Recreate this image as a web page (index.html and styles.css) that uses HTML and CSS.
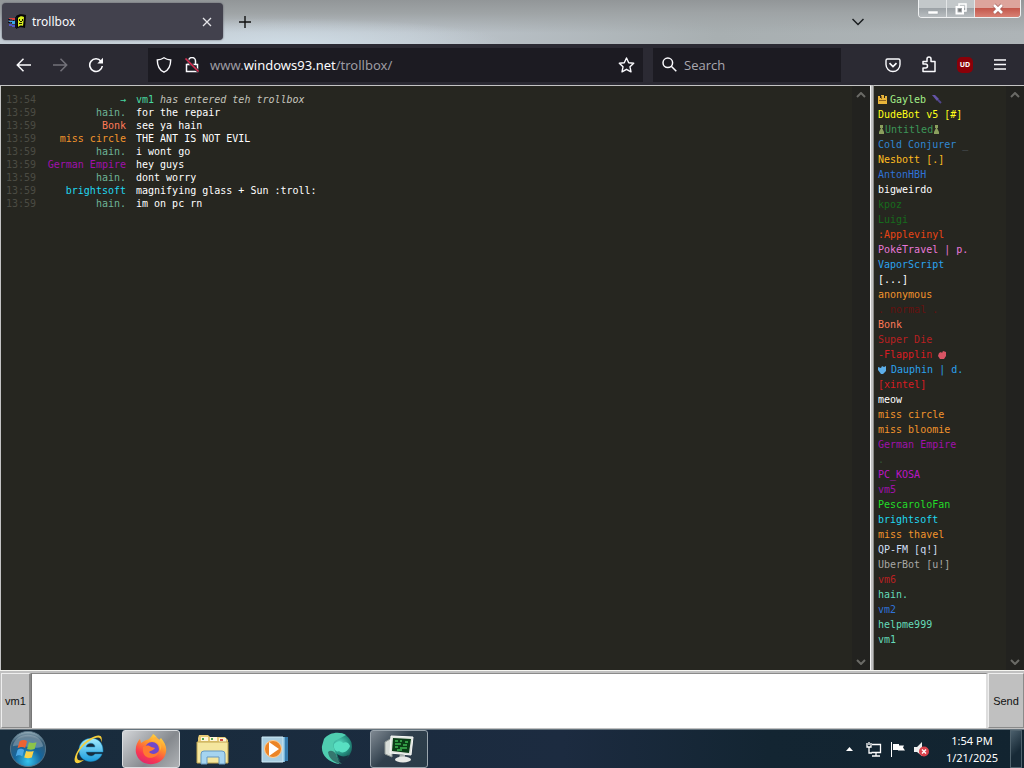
FILE: index.html
```html
<!DOCTYPE html>
<html lang="en">
<head>
<meta charset="utf-8">
<title>trollbox</title>
<link rel="stylesheet" href="styles.css">
</head>
<body>
<header class="titlebar">
  <div class="tab">
    <svg class="favicon" width="18" height="16" viewBox="0 0 18 16"><path d="M8 2c3-2 6-2 10-1l-1 13c-3-1-6-1-9 1z" fill="#050505"/><path d="M10 4c2-2 4-2 6-1l-1 9c-2-1-4 0-5 1z" fill="#d8ee20"/><path d="M11 5h1v2h-1zM14 5h1v2h-1zM11 9h3v1h-3zM12 7h2v1h-2z" fill="#161800"/><path d="M1 4h3v1H1zM4 4h4v2H4z" fill="#d8403c"/><path d="M1 7h3v1H1zM4 7h4v3H4z" fill="#38a8e8"/><path d="M1 10h3v2H1zM4 11h4v2H4z" fill="#5356c8"/><path d="M0 5h2v1H0zM0 8h2v1H0zM5 6h1v1H5zM3 8h1v1H3zM7 3h2v11H7z" fill="#101020"/></svg>
    <span class="tab-title">trollbox</span>
    <button class="icon-btn tab-close" aria-label="Close tab"><svg width="10" height="10" viewBox="0 0 10 10" fill="none" stroke="#e4e4e8" stroke-width="1.3"><path d="M1 1l8 8M9 1L1 9"/></svg></button>
  </div>
  <button class="icon-btn new-tab" aria-label="New tab"><svg width="12" height="12" viewBox="0 0 12 12" stroke="#111" stroke-width="1.4"><path d="M6 0v12M0 6h12"/></svg></button>
  <button class="icon-btn list-tabs" aria-label="List all tabs"><svg width="12" height="8" viewBox="0 0 12 8" fill="none" stroke="#1a1e20" stroke-width="1.5"><path d="M.5 1L6 6.5 11.500 1"/></svg></button>
  <div class="window-controls">
    <button class="wc wc-min" aria-label="Minimize"><svg width="12" height="12" viewBox="0 0 12 12"><path d="M1 8h10v3H1z" fill="#fff" stroke="#9ba1a4" stroke-width=".5"/></svg></button>
    <button class="wc wc-max" aria-label="Restore"><svg width="12" height="12" viewBox="0 0 12 12" fill="none"><path d="M4 3V1h7v7H9" stroke="#fff" stroke-width="1.500"/><path d="M1.500 4h6.500v6.500H1.500z" stroke="#fff" stroke-width="2"/><path d="M3.500 6h2.500v2.500H3.500z" fill="#777"/></svg></button>
    <button class="wc wc-close" aria-label="Close"><svg width="12" height="12" viewBox="0 0 12 12"><path d="M2 2l8 8M10 2l-8 8" stroke="#a4605a" stroke-width="4"/><path d="M2 2l8 8M10 2l-8 8" stroke="#fff" stroke-width="2.600"/></svg></button>
  </div>
</header>

<nav class="toolbar">
  <div class="nav-group">
    <button class="icon-btn" aria-label="Back"><svg width="16" height="16" viewBox="0 0 16 16" fill="none" stroke="#fbfbfe" stroke-width="1.500"><path d="M15 8H1.500M7.500 1.800L1.300 8l6.200 6.200"/></svg></button>
    <button class="icon-btn" aria-label="Forward"><svg width="16" height="16" viewBox="0 0 16 16" fill="none" stroke="#73727a" stroke-width="1.500"><path d="M1 8h13.500M8.500 1.800L14.700 8l-6.200 6.200"/></svg></button>
    <button class="icon-btn" aria-label="Reload"><svg width="16" height="16" viewBox="0 0 16 16"><path d="M13 4.200A6.300 6.300 0 1 0 14.300 9" fill="none" stroke="#fbfbfe" stroke-width="1.600"/><path d="M15 .8v5.700H9.300z" fill="#fbfbfe"/></svg></button>
  </div>
  <div class="urlbar">
    <svg width="16" height="16" viewBox="0 0 16 16" fill="none" stroke="#fbfbfe" stroke-width="1.400"><path d="M8 .8C6 2.200 3.500 2.800 1.300 3 1.300 8.500 2.500 12.800 8 15.200c5.500-2.400 6.700-6.700 6.700-12.200C12.500 2.800 10 2.200 8 .8z"/></svg>
    <svg width="16" height="16" viewBox="0 0 16 16" fill="none"><path d="M4.500 7V4a3.500 3.500 0 0 1 7 0v3M2.500 7.500h11v7h-11z" stroke="#fbfbfe" stroke-width="1.500"/><path d="M1.500 1.500l13 13" stroke="#26252c" stroke-width="3"/><path d="M1.500 1.500l13 13" stroke="#d92c50" stroke-width="1.600"/></svg>
    <a class="url" href="#"><span class="dim">www.</span>windows93.net<span class="dim">/trollbox/</span></a>
    <button class="icon-btn star" aria-label="Bookmark this page"><svg width="17" height="16" viewBox="0 0 17 16" fill="none" stroke="#fbfbfe" stroke-width="1.400" stroke-linejoin="round"><path d="M8.500 1l2.200 4.700 5 .6-3.700 3.500 1 5-4.500-2.500L4 14.800l1-5L1.300 6.300l5-.6z"/></svg></button>
  </div>
  <label class="searchbar">
    <svg width="15" height="15" viewBox="0 0 15 15" fill="none" stroke="#fbfbfe" stroke-width="1.500"><circle cx="5.800" cy="5.800" r="4.800"/><path d="M9.300 9.300l5 5"/></svg>
    <input type="text" placeholder="Search" aria-label="Search">
  </label>
  <div class="tools">
    <button class="icon-btn" aria-label="Pocket"><svg width="16" height="16" viewBox="0 0 16 16" fill="none" stroke="#fbfbfe" stroke-width="1.400"><path d="M2.500 2h11q1.500 0 1.500 1.500V7.500a7 7 0 0 1-14 0V3.500Q1 2 2.500 2z"/><path d="M4.500 6.200L8 9.500l3.500-3.300" stroke-width="1.700"/></svg></button>
    <button class="icon-btn" aria-label="Extensions"><svg width="16" height="17" viewBox="0 0 16 17" fill="none" stroke="#fbfbfe" stroke-width="1.500" stroke-linejoin="round"><path d="M2 5.500h4V3a2 2 0 0 1 4 0v2.500h4v10H2v-3.500h2.500a2 2 0 0 0 0-4H2z"/></svg></button>
    <button class="icon-btn" aria-label="uBlock Origin"><span class="ublock">UD</span></button>
    <button class="icon-btn" aria-label="Menu"><svg width="14" height="12" viewBox="0 0 14 12" stroke="#fbfbfe" stroke-width="1.400"><path d="M1 1h12M1 5.500h12M1 10h12"/></svg></button>
  </div>
</nav>

<main class="app">
  <div class="panels">
    <section class="panel chat">
      <div class="log">
        <div class="msg"><time>13:54</time><b class="mint">→</b><p><span class="mint">vm1</span> <i>has entered teh trollbox</i></p></div>
        <div class="msg"><time>13:59</time><b class="sea">hain.</b><p>for the repair</p></div>
        <div class="msg"><time>13:59</time><b class="coral">Bonk</b><p>see ya hain</p></div>
        <div class="msg"><time>13:59</time><b class="orange">miss circle</b><p>THE ANT IS NOT EVIL</p></div>
        <div class="msg"><time>13:59</time><b class="sea">hain.</b><p>i wont go</p></div>
        <div class="msg"><time>13:59</time><b class="purple">German Empire</b><p>hey guys</p></div>
        <div class="msg"><time>13:59</time><b class="sea">hain.</b><p>dont worry</p></div>
        <div class="msg"><time>13:59</time><b class="cyan">brightsoft</b><p>magnifying glass + Sun :troll:</p></div>
        <div class="msg"><time>13:59</time><b class="sea">hain.</b><p>im on pc rn</p></div>
      </div>
      <div class="scroll"><svg width="10" height="6" viewBox="0 0 10 6"><path d="M1 5l4-4 4 4"/></svg><svg width="10" height="6" viewBox="0 0 10 6"><path d="M1 1l4 4 4-4"/></svg></div>
    </section>
    <aside class="panel users">
      <ul class="names">
        <li class="lime"><svg width="10" height="9" viewBox="0 0 10 9"><path d="M0 1h2v2h1V0h3v3h1V1h2v8H0z" fill="#e8b53a"/><path d="M1 5h7v1H1zM3 1h1v3H3z" fill="#8e6420"/></svg><span>Gayleb</span><svg class="knife" width="10" height="9" viewBox="0 0 10 9"><path d="M0 0h3l4 4-2 2z" fill="#6554a8"/><path d="M6 5l3 3" stroke="#50458a" stroke-width="2"/></svg></li>
        <li class="yellow">DudeBot v5 [#]</li>
        <li class="green"><svg width="7" height="9" viewBox="0 0 7 9"><path d="M2 0h3v3H4l2 4v2H1V7l2-4H2z" fill="#8ba05d"/></svg>Untitled<svg width="7" height="9" viewBox="0 0 7 9"><path d="M2 0h3v3H4l2 4v2H1V7l2-4H2z" fill="#8ba05d"/></svg></li>
        <li class="blue"><span>Cold Conjurer <span class="faint">_</span></span></li>
        <li class="gold">Nesbott [.]</li>
        <li class="royal">AntonHBH</li>
        <li class="white">bigweirdo</li>
        <li class="forest">kpoz</li>
        <li class="forest">Luigi</li>
        <li class="redorange">:Applevinyl</li>
        <li class="orchid">PokéTravel | p.</li>
        <li class="azure">VaporScript</li>
        <li class="white">[...]</li>
        <li class="orange">anonymous</li>
        <li class="maroon">. normal .</li>
        <li class="coral">Bonk</li>
        <li class="crimson">Super Die</li>
        <li class="red"><span>-Flapplin</span><svg class="after" width="9" height="9" viewBox="0 0 9 9"><path d="M1 3l2-1 1 1 1-2 3 1v4L6 9H2L0 6z" fill="#d85464"/></svg></li>
        <li class="azure"><svg class="before" width="9" height="9" viewBox="0 0 9 9"><path d="M0 2l3 1 1-2 2 1 2-1v5L5 9H3L0 5z" fill="#5daee8"/></svg><span>Dauphin | d.</span></li>
        <li class="red">[xintel]</li>
        <li class="white">meow</li>
        <li class="orange">miss circle</li>
        <li class="orange">miss bloomie</li>
        <li class="purple">German Empire</li>
        <li class="moss">.</li>
        <li class="magenta">PC_KOSA</li>
        <li class="purple">vm5</li>
        <li class="lawn">PescaroloFan</li>
        <li class="cyan">brightsoft</li>
        <li class="orange">miss thavel</li>
        <li class="pale">QP-FM [q!]</li>
        <li class="gray">UberBot [u!]</li>
        <li class="crimson">vm6</li>
        <li class="aqua">hain.</li>
        <li class="royal">vm2</li>
        <li class="aqua">helpme999</li>
        <li class="aqua">vm1</li>
      </ul>
      <div class="scroll"><svg width="10" height="6" viewBox="0 0 10 6"><path d="M1 5l4-4 4 4"/></svg><svg width="10" height="6" viewBox="0 0 10 6"><path d="M1 1l4 4 4-4"/></svg></div>
    </aside>
  </div>
  <form class="composer">
    <button type="button" class="nick">vm1</button>
    <textarea aria-label="Message"></textarea>
    <button type="button" class="send">Send</button>
  </form>
</main>

<footer class="taskbar">
  <button class="task start" aria-label="Start"><svg width="40" height="38" viewBox="0 0 40 40"><defs><radialGradient id="orb" cx=".5" cy=".85" r=".85"><stop offset="0" stop-color="#35c4ee"/><stop offset=".45" stop-color="#15659c"/><stop offset=".8" stop-color="#365b74"/><stop offset="1" stop-color="#a0b6c0"/></radialGradient></defs><circle cx="20" cy="20" r="18.500" fill="url(#orb)" stroke="#587688"/><path d="M4 17C7 1 33 1 36 17 25 22 15 14 4 17z" fill="#fff" opacity=".25"/><path d="M11 12c3-2 6-2 8 0l-2 7c-3-2-5-1-8 0z" fill="#ec6432"/><path d="M21 13c3 1 5 1 8 0l-2 7c-3 1-5 1-8 0z" fill="#8bc44a"/><path d="M9 21c3-2 5-1 7 0l-2 7c-2-2-5-2-7 0z" fill="#4ba8e6"/><path d="M18 22c3 1 5 1 8 0l-2 7c-3 1-5 1-8 0z" fill="#fbd248"/></svg></button>
  <button class="task" aria-label="Internet Explorer"><svg width="32" height="32" viewBox="0 0 32 32"><defs><linearGradient id="ie" x2="0" y2="1"><stop stop-color="#a5ecff"/><stop offset="1" stop-color="#1a9bdc"/></linearGradient></defs><path d="M30 19H13c1 5 7 5 9 2h7c-4 11-23 10-23-4C6 2 31 0 30 19zM13 14h9c0-5-8-5-9 0z" fill="url(#ie)" stroke="#148ac0" stroke-width=".5"/><path d="M28 10c3-9-3-9-10-5C10 9 4 17 2 24c-2 7 3 8 9 3-12 3-7-10 4-18 9-6 14-6 13 1z" fill="#f6cf3b"/></svg></button>
  <button class="task focused" aria-label="Firefox"><svg width="32" height="32" viewBox="0 0 32 32"><defs><linearGradient id="fox" x1=".8" y1="0" x2=".3" y2="1"><stop stop-color="#ffe045"/><stop offset=".4" stop-color="#ff902b"/><stop offset=".75" stop-color="#fa3950"/><stop offset="1" stop-color="#df286e"/></linearGradient></defs><path d="M18 1c4 2 4 5 6 6l2-2c4 5 6 9 5 14C29 34 5 36 1 20 0 14 2 9 5 6l1 4 5-3c2 0 4-1 7-6z" fill="url(#fox)"/><circle cx="17" cy="16" r="7" fill="#7048cc"/><path d="M8 14c3-2 6-2 8 0l4 1c-2 3-4 2-6 4 4 4 8 1 10-1-1 8-15 10-16 0z" fill="#ff7931"/><path d="M16 8c7-1 10 5 9 10 3-5 1-12-5-14z" fill="#ffb23b"/></svg></button>
  <button class="task" aria-label="File Explorer"><svg width="34" height="32" viewBox="0 0 34 32"><path d="M2 5l1-3h9l2 2h15l3 3v23H2z" fill="#e7cb77"/><path d="M5 4h7v4H5zM14 4h7v4h-7zM23 5h7v4h-7z" fill="#fff6d8"/><path d="M6 5h2v2H6zM15 5h2v2h-2z" fill="#51a652"/><path d="M24 6h3v2h-3z" fill="#d04b40"/><path d="M1 9h31v21H1z" fill="#f4e69e" stroke="#c1a650"/><path d="M5 31V21q0-3 3-3h18q3 0 3 3v10h-6v-7H11v7z" fill="#a5d4f0" stroke="#6497c0"/></svg></button>
  <button class="task" aria-label="Media Player"><svg width="28" height="27" viewBox="0 0 28 27"><path d="M6 1h21v24H6z" fill="#347aac"/><path d="M3 1h21v25H3z" fill="#75b4d8"/><path d="M1 1h21v25H1z" fill="#a8cde0" stroke="#ceebf7"/><circle cx="12" cy="13" r="8.500" fill="#eb8426" stroke="#ffd096"/><path d="M8 6l10 7-10 7z" fill="#fff"/></svg></button>
  <button class="task" aria-label="Teal orb"><svg width="34" height="34" viewBox="0 0 34 34"><defs><radialGradient id="teal" cx=".55" cy=".4" r=".6"><stop stop-color="#5ce0c4"/><stop offset=".6" stop-color="#258f80"/><stop offset="1" stop-color="#15504f"/></radialGradient></defs><circle cx="18" cy="15" r="14" fill="url(#teal)"/><path d="M4 7C9 0 20-1 26 3L15 9c-2 2-2 5-1 7l5 16C8 30 1 23 2 14z" fill="#4fcdb0"/><path d="M14 12c4-4 7-3 9-1 3-2 6 0 7 3-2 6-8 8-11 5-3 2-6-3-5-7z" fill="#58dfc2"/><path d="M8 20c2-2 5-2 8 2 1 4 2 7 6 10C14 31 9 27 8 20z" fill="#35776f"/><path d="M17 22c4 3 8 3 12 1l-6 8c-3-2-5-5-6-9z" fill="#18303f"/></svg></button>
  <button class="task open" aria-label="Remote desktop"><svg width="32" height="28" viewBox="0 0 32 28"><path d="M2 7l7-4v19l-7-3z" fill="#d8ddd9" stroke="#929b98"/><path d="M8 1l22 1-2 18-21-2z" fill="#e0e4de" stroke="#fafcf9"/><path d="M10 3l18 1-2 14-17-2z" fill="#0a3d16"/><path d="M12 6h3M17 6h2M22 7h3M12 9h6M20 10h4M12 12h3M17 13h7M14 15h5" stroke="#3fb653" stroke-width="1.300"/><path d="M17 19l5 1v3h-6z" fill="#a9b0ad"/><ellipse cx="20" cy="24.500" rx="8" ry="3" fill="#e7e9e6"/></svg></button>
  <div class="tray">
    <button class="icon-btn" aria-label="Show hidden icons"><svg width="7" height="4" viewBox="0 0 7 4"><path d="M3.500 0L7 4H0z" fill="#fff"/></svg></button>
    <svg width="16" height="15" viewBox="0 0 16 15" fill="none" stroke="#fff" stroke-width="1.300"><path d="M6 2.500h8.500v8H5.500M10 11v3M6 14h8M3 5v6h3M1 1v4h4V1M3 0v3"/></svg>
    <svg width="16" height="15" viewBox="0 0 16 15"><path d="M1 0h1v15H1zM3 2h6v1.500h5l-1 2 2 3H8V8H3z" fill="#fff"/></svg>
    <svg width="16" height="15" viewBox="0 0 16 15"><path d="M0 5h3l5-5v14L3 10H0z" fill="#eee"/><circle cx="10" cy="9.500" r="5" fill="#d9414b"/><path d="M8 7.500l4 4M12 7.500l-4 4" stroke="#fff" stroke-width="1.400"/></svg>
    <time class="clock"><span>1:54 PM</span><span>1/21/2025</span></time>
    <button class="show-desktop" aria-label="Show desktop"></button>
  </div>
</footer>
</body>
</html>
```
FILE: styles.css
```css
* { box-sizing: border-box; }
body {
  margin: 0;
  height: 100vh;
  display: flex;
  flex-direction: column;
  overflow: hidden;
  font-family: "Noto Sans", "Open Sans", sans-serif;
  background: #262620;
}
svg { display: block; flex: none; }
button { font-family: inherit; padding: 0; margin: 0; border: 0; background: none; }
.icon-btn { display: flex; align-items: center; justify-content: center; }

.titlebar {
  flex: none;
  height: 44px;
  display: flex;
  align-items: center;
  background:
    radial-gradient(ellipse 220px 26px at 28% 100%, #cfdce5, transparent),
    linear-gradient(180deg, #929698 0, #9fa4a6 30%, transparent 75%),
    linear-gradient(90deg, #c4cdd5, #bdc5cc 40%, #a8afb1 70%, #aeb4b7);
}
.tab {
  align-self: flex-start;
  width: 221px;
  height: 37px;
  margin: 3px 0 0 2px;
  padding: 0 11px 0 6px;
  display: flex;
  align-items: center;
  gap: 6px;
  border-radius: 4px;
  background: #42414d;
  box-shadow: 0 0 2px #55555f;
  color: #fbfbfe;
  font-size: 12px;
}
.tab-title { flex: 1; }
.new-tab { margin-left: 16px; }
.list-tabs { margin-left: auto; margin-right: 54px; }
.window-controls {
  align-self: flex-start;
  display: flex;
  width: 103px;
  height: 18px;
  margin-right: 3px;
  border: 1px solid #eef0f1;
  border-top: 0;
  border-radius: 0 0 4px 4px;
  overflow: hidden;
}
.wc {
  display: flex;
  align-items: center;
  justify-content: center;
  flex: 28;
  background: linear-gradient(#c3c8ca 0 45%, #9da3a7 50%, #b8bdc0);
}
.wc + .wc { border-left: 1px solid #e2e5e6; }
.wc-close { flex: 46; background: linear-gradient(#dda49c 0 45%, #c4584c 50%, #d98174); }

.toolbar {
  flex: none;
  height: 41px;
  display: flex;
  align-items: center;
  background: #2b2a33;
}
.nav-group { flex: none; display: flex; gap: 20px; padding-left: 16px; width: 148px; }
.urlbar, .searchbar { height: 34px; display: flex; align-items: center; background: #1c1b22; }
.urlbar { flex: 1; min-width: 0; padding: 0 8px; gap: 12px; }
.url { color: #fbfbfe; text-decoration: none; font-size: 13px; margin-left: -2px; }
.dim { color: #9c9ba3; }
.star { margin-left: auto; }
.searchbar { flex: none; width: 188px; margin-left: 10px; padding: 0 9px; gap: 7px; }
.searchbar input {
  min-width: 0;
  flex: 1;
  border: 0;
  padding: 0;
  background: none;
  color: #fbfbfe;
  font: 13px "Open Sans", sans-serif;
}
.searchbar input::placeholder { color: #a9a8b0; opacity: 1; }
.tools { flex: none; display: flex; align-items: center; gap: 20px; padding: 0 17px 0 44px; }
.ublock {
  width: 16px;
  height: 16px;
  display: grid;
  place-items: center;
  border-radius: 5px;
  background: #8b0008;
  color: #fff;
  font-size: 7px;
  font-weight: bold;
}

.app { flex: 1; min-height: 0; display: flex; flex-direction: column; background: #c0c0c0; }
.panels { flex: 1; min-height: 0; display: flex; gap: 2px; border-bottom: 1px solid #f4f4f0; }
.panel {
  display: flex;
  min-width: 0;
  border: 1px solid #c4c4c4;
  border-bottom: 0;
  border-right-color: #f6f6f6;
  background: #262620;
  font: 10px/13px "DejaVu Sans Mono", monospace;
}
.chat { flex: 1; }
.users { width: 151px; border-right: 0; border-left-color: #8b8b88; }
.log { flex: 1; padding: 7px 0 0 5px; color: #fff; }
.msg { display: grid; grid-template-columns: 30px 90px 1fr; }
.msg time { color: #4b4b43; }
.msg b { font-weight: normal; text-align: right; }
.msg p { margin: 0 0 0 10px; }
.msg i { color: #c4c4bc; }
.scroll {
  width: 18px;
  padding: 6px 0 5px;
  display: flex;
  flex-direction: column;
  align-items: center;
  justify-content: space-between;
  background: #22221f;
}
.scroll path { fill: none; stroke: #6a6a66; stroke-width: 2; }
.names { flex: 1; margin: 0; padding: 6px 0 0 4px; list-style: none; line-height: 15px; }
.names li { display: flex; align-items: center; height: 15px; white-space: nowrap; }
.names .knife { margin-left: 6px; }
.names .before { margin-right: 4px; }
.names .after { margin-left: 6px; }
.names li:first-child svg:first-child { margin-right: 2px; }
.mint { color: #48d9a0; }
.sea { color: #6eb397; }
.coral { color: #ff7a58; }
.orange { color: #f2942c; }
.purple { color: #a010ac; }
.cyan { color: #20d8f0; }
.lime { color: #a4ee88; }
.yellow { color: #ffff18; }
.green { color: #3d9658; }
.blue { color: #3187d2; }
.faint { color: #57616a; }
.gold { color: #ffbd20; }
.royal { color: #2f72d8; }
.white { color: #fff; }
.forest { color: #176b1d; }
.redorange { color: #e84414; }
.orchid { color: #e878d8; }
.azure { color: #2ba2ee; }
.maroon { color: #65110f; }
.crimson { color: #b82020; }
.red { color: #d91c22; }
.moss { color: #345533; }
.magenta { color: #bc15c5; }
.lawn { color: #22dd28; }
.pale { color: #d0dff4; }
.gray { color: #a8a8a4; }
.aqua { color: #65dbb9; }

.composer { flex: none; height: 58px; margin: 0; padding: 2px 0 1px 1px; display: flex; }
.composer button {
  border: 1px solid #8a8a8a;
  border-top-color: #eee;
  border-left-color: #eee;
  background: #c0c0c0;
  color: #111;
  font: 11px "Liberation Sans", Arial, sans-serif;
}
.composer .nick { width: 30px; border-right-width: 2px; }
.composer .send { width: 36px; }
.composer textarea {
  flex: 1;
  min-width: 0;
  border: 1px solid #8a8a8a;
  border-left: 1px solid #777;
  border-right: 2px solid #ddd;
  border-bottom: 0;
  background: #fff;
  resize: none;
}

.taskbar {
  flex: none;
  height: 39px;
  display: flex;
  align-items: center;
  gap: 4px;
  border-top: 1px solid #66747e;
  background: linear-gradient(90deg, #182c3c, #1c2b40 55%, #132532 75%, #122430);
}
.task { width: 58px; height: 38px; display: grid; place-items: center; border-radius: 3px; }
.start { width: 56px; }
.task.focused { border: 1px solid #dadde0; background: linear-gradient(135deg, #d3d5d8, #85898e 60%, #afb2b5); }
.task.open { border: 1px solid #9aa5ad; background: linear-gradient(135deg, #7f8992, #303f4c 45%, #293b48); }
.tray { margin-left: auto; height: 100%; display: flex; align-items: center; gap: 8px; color: #fff; }
.tray .icon-btn { margin-right: 5px; }
.clock { display: flex; flex-direction: column; align-items: center; width: 68px; font-size: 11px; line-height: 17px; }
.show-desktop { width: 12px; height: 100%; margin: 0 2px 0 -4px; border: 1px solid #51636e; background: linear-gradient(135deg, #4b5f6c, #172936 60%); }
```
